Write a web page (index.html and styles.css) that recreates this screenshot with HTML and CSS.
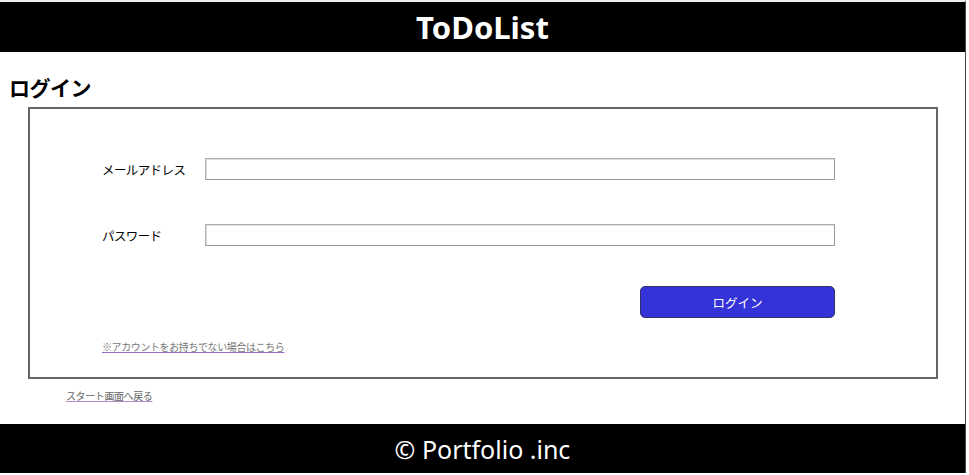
FILE: index.html
```html
<!DOCTYPE html>
<html lang="ja">
<head>
<meta charset="utf-8">
<title>ToDoList</title>
<link rel="stylesheet" href="styles.css">
</head>
<body>
<div class="page">
  <header class="site-header"><h1 class="site-title">ToDoList</h1></header>
  <main class="main">
    <h2 class="page-title">ログイン</h2>
    <section class="login-box">
      <form class="login-form">
        <div class="field">
          <label class="field-label" for="email">メールアドレス</label>
          <input class="field-input" id="email" type="text">
        </div>
        <div class="field field-second">
          <label class="field-label" for="pw">パスワード</label>
          <input class="field-input" id="pw" type="password">
        </div>
        <div class="actions">
          <button class="login-btn" type="button">ログイン</button>
        </div>
        <a class="signup-link" href="#">※アカウントをお持ちでない場合はこちら</a>
      </form>
    </section>
    <a class="back-link" href="#">スタート画面へ戻る</a>
  </main>
  <footer class="site-footer">© Portfolio .inc</footer>
</div>
</body>
</html>
```

FILE: styles.css
```css
html, body {
  margin: 0;
  padding: 0;
  background: #fff;
}
body {
  font-family: "Noto Sans CJK JP", "Noto Sans", sans-serif;
  color: #000;
}
.page {
  border-top: 2px solid #ededed;
  width: 966px;
  border-right: 1px solid #444;
  min-height: 473px;
  box-sizing: border-box;
}
.site-header {
  background: #000;
  height: 50px;
  display: flex;
  align-items: center;
  justify-content: center;
}
.site-title {
  margin: 0;
  color: #fff;
  font-family: "Noto Sans", sans-serif;
  font-weight: 700;
  font-size: 31px;
  line-height: 1;
}
.main {
  padding-top: 22px;
}
.page-title {
  margin: 0 0 7px 9px;
  font-size: 21px;
  font-weight: 700;
  line-height: 26px;
  letter-spacing: -0.5px;
}
.login-box {
  margin-left: 28px;
  width: 910px;
  height: 272px;
  box-sizing: border-box;
  border: 2px solid #666;
}
.login-form {
  display: flex;
  flex-direction: column;
  padding: 49px 0 0 72px;
}
.field {
  display: flex;
  align-items: center;
}
.field-second {
  margin-top: 44px;
}
.field-label {
  width: 103px;
  font-size: 12.5px;
  letter-spacing: -0.6px;
}
.field-input {
  width: 630px;
  height: 22px;
  box-sizing: border-box;
  border: 1px solid #999;
  border-top-color: #b0b0b0;
  border-left-color: #b0b0b0;
  box-shadow: inset 1px 1px 0 #ddd;
  margin: 0;
  padding: 0;
}
.actions {
  display: flex;
  justify-content: flex-end;
  width: 733px;
  margin-top: 40px;
}
.login-btn {
  width: 195px;
  height: 32px;
  background: #3333d8;
  color: #fff;
  border: 1px solid #333366;
  border-radius: 5px;
  font-family: "Noto Sans CJK JP", sans-serif;
  font-size: 12.5px;
  padding: 0;
}
.signup-link {
  align-self: flex-start;
  margin-top: 22px;
  font-size: 10px;
  color: #777;
  text-decoration-color: #9a6ac8;
  letter-spacing: -0.4px;
  line-height: 14px;
}
.back-link {
  display: inline-block;
  margin: 10px 0 0 66px;
  font-size: 10px;
  color: #666;
  text-decoration-color: #b08ed0;
  letter-spacing: -0.4px;
  line-height: 14px;
}
.site-footer {
  margin-top: 19px;
  background: #000;
  color: #fff;
  height: 49px;
  display: flex;
  align-items: center;
  justify-content: center;
  font-family: "Noto Sans", sans-serif;
  font-size: 25px;
}
```
